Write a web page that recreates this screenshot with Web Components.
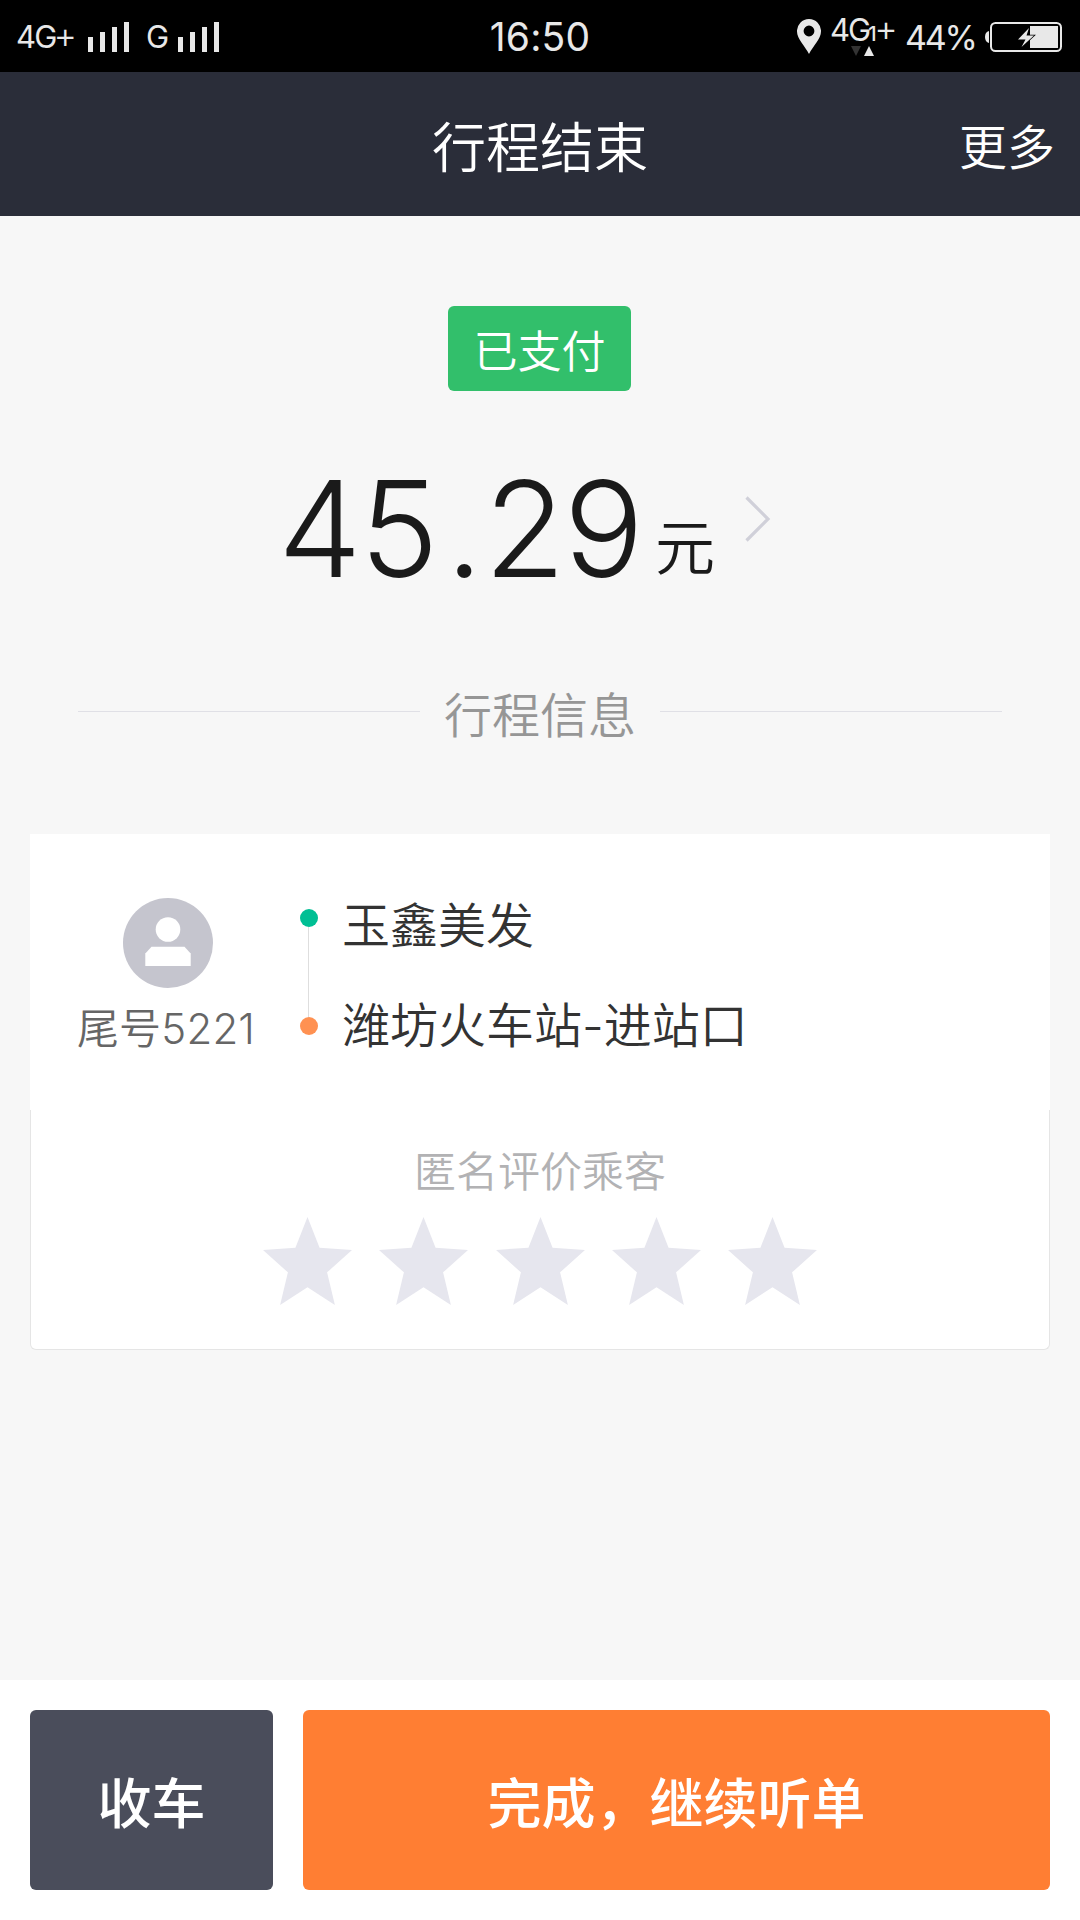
<!DOCTYPE html>
<html lang="zh-CN">
<head>
<meta charset="utf-8">
<title>行程结束</title>
<style>
  html, body {
    margin: 0;
    padding: 0;
  }

  body {
    width: 1080px;
    height: 1920px;
    overflow: hidden;
    background: #f7f7f7;
    font-family: "Noto Sans CJK SC", "Liberation Sans", sans-serif;
  }
</style>
</head>
<body>
<trip-page>
  <status-bar slot="status" time="16:50" battery="44"></status-bar>
  <nav-header slot="header" action="更多">行程结束</nav-header>

  <pay-summary status="已支付" amount="45.29" unit="元"></pay-summary>
  <section-title>行程信息</section-title>
  <trip-card>
    <passenger-badge slot="passenger">尾号5221</passenger-badge>
    <trip-route slot="route" from="玉鑫美发" to="潍坊火车站-进站口"></trip-route>
    <star-rating slot="rating" max="5">匿名评价乘客</star-rating>
  </trip-card>

  <action-button slot="actions" variant="dark">收车</action-button>
  <action-button slot="actions" variant="primary">完成，继续听单</action-button>
</trip-page>

<script>
/**
 * TripPage - Page shell: status bar, header, content and bottom actions
 *
 * @element trip-page
 */
class TripPage extends HTMLElement {
  constructor() {
    super();
    this.attachShadow({ mode: 'open' });
  }

  connectedCallback() {
    this.shadowRoot.innerHTML = `
      <style>
        :host {
          display: flex;
          flex-direction: column;
          width: 1080px;
          height: 1920px;
        }

        main {
          flex: 1;
          display: flex;
          flex-direction: column;
        }

        footer {
          display: flex;
          gap: 30px;
          box-sizing: border-box;
          height: 240px;
          padding: 30px;
          background: #fff;
        }
      </style>
      <slot name="status"></slot>
      <slot name="header"></slot>
      <main><slot></slot></main>
      <footer><slot name="actions"></slot></footer>
    `;
  }
}

/**
 * SignalBars - Four rising signal strength bars
 *
 * @element signal-bars
 */
class SignalBars extends HTMLElement {
  constructor() {
    super();
    this.attachShadow({ mode: 'open' });
  }

  connectedCallback() {
    this.shadowRoot.innerHTML = `
      <style>
        :host {
          display: flex;
          align-items: flex-end;
          gap: 7px;
          height: 30px;
        }

        i {
          width: 5px;
          background: #e8e8e8;
        }
      </style>
      ${[15, 20, 25, 30].map(h => `<i style="height:${h}px"></i>`).join('')}
    `;
  }
}

/**
 * StatusBar - System status bar
 *
 * @element status-bar
 * @attr {string} time - Clock text
 * @attr {string} battery - Battery percentage
 */
class StatusBar extends HTMLElement {
  constructor() {
    super();
    this.attachShadow({ mode: 'open' });
  }

  connectedCallback() {
    const time = this.getAttribute('time') || '';
    const battery = this.getAttribute('battery') || '0';

    this.shadowRoot.innerHTML = `
      <style>
        :host {
          display: grid;
          grid-template-columns: 1fr auto 1fr;
          align-items: center;
          height: 72px;
          background: #000;
          color: #e8e8e8;
          font-family: Inter, sans-serif;
          white-space: nowrap;
        }

        .left, .right {
          display: flex;
          align-items: center;
          height: 72px;
        }

        .left {
          padding-left: 16px;
          font-size: 31px;
        }

        .right {
          justify-content: flex-end;
          padding-right: 18px;
        }

        .net {
          width: 72px;
          line-height: 36px;
          letter-spacing: -1.8px;
        }

        .net.second {
          width: 32px;
          margin-left: 17px;
        }

        /* the plus is drawn wider than the letters */
        .plus {
          margin-left: -2px;
          font-size: 36px;
          font-weight: 350;
          line-height: 1px;
        }

        .time {
          font-size: 39px;
          line-height: 72px;
          letter-spacing: 0.2px;
          padding-top: 1px;
        }

        .data {
          display: flex;
          flex-direction: column;
          width: 68px;
          margin: 0 7px 0 9px;
          font-size: 31px;
          letter-spacing: -2px;
        }

        .data div {
          display: flex;
          align-items: baseline;
          height: 29px;
          line-height: 26px;
        }

        .data small {
          font-size: 20px;
          font-weight: 500;
          width: 8px;
          margin-left: -1px;
        }

        .percent {
          width: 80px;
          padding-top: 1px;
          font-size: 34px;
          letter-spacing: -2.2px;
        }

        svg {
          display: block;
        }
      </style>
      <div class="left">
        <span class="net">4G<span class="plus">+</span></span>
        <signal-bars></signal-bars>
        <span class="net second">G</span>
        <signal-bars></signal-bars>
      </div>
      <div class="time">${time}</div>
      <div class="right">
        <svg width="24" height="35" viewBox="0 0 24 35">
          <path fill="#e8e8e8" fill-rule="evenodd" d="M12 0a12 12 0 0 1 12 12.500C24 20 16 27 12 35 8 27 0 20 0 12.500A12 12 0 0 1 12 0zM12 6.600a5.400 5.400 0 1 0 0 10.800a5.400 5.400 0 1 0 0-10.800z"/>
        </svg>
        <div class="data">
          <div>4G<small>1</small><span class="plus">+</span></div>
          <svg width="66" height="10" viewBox="0 0 66 10">
            <path fill="#333" d="M21 0h10l-5 10z"/>
            <path fill="#e8e8e8" d="M34 10h10L39 0z"/>
          </svg>
        </div>
        <span class="percent">${battery}%</span>
        <svg width="77" height="30" viewBox="0 0 77 30">
          <path fill="#e8e8e8" d="M4 9v12q-4-1-4-6t4-6z"/>
          <rect x="6" y="1" width="70" height="28" rx="4.500" fill="none" stroke="#e8e8e8" stroke-width="2"/>
          <rect x="45" y="4" width="28" height="22" fill="#e8e8e8"/>
          <path d="M44 6L33 17.500h7.500L36.500 25 49 13.500h-7.500z" fill="#e8e8e8" stroke="#000" stroke-width="1.500" paint-order="stroke"/>
        </svg>
      </div>
    `;
  }
}

/**
 * NavHeader - Dark title bar with one action on the right
 *
 * @element nav-header
 * @attr {string} action - Action label
 */
class NavHeader extends HTMLElement {
  constructor() {
    super();
    this.attachShadow({ mode: 'open' });
  }

  connectedCallback() {
    this.shadowRoot.innerHTML = `
      <style>
        :host {
          display: grid;
          grid-template-columns: 1fr auto 1fr;
          align-items: center;
          height: 144px;
          background: #2a2d39;
          color: #fff;
          font-weight: 350;
        }

        h1 {
          grid-column: 2;
          margin: 0;
          padding-top: 2px;
          font-size: 54px;
          line-height: 80px;
          font-weight: inherit;
        }

        .action {
          justify-self: end;
          padding-right: 25px;
          font-size: 48px;
          line-height: 72px;
        }
      </style>
      <h1><slot></slot></h1>
      <div class="action">${this.getAttribute('action') || ''}</div>
    `;
  }
}

/**
 * PaySummary - Payment state and amount
 *
 * @element pay-summary
 * @attr {string} status - Payment state label
 * @attr {string} amount - Amount
 * @attr {string} unit - Currency unit
 */
class PaySummary extends HTMLElement {
  constructor() {
    super();
    this.attachShadow({ mode: 'open' });
  }

  connectedCallback() {
    const amount = this.getAttribute('amount') || '';

    this.shadowRoot.innerHTML = `
      <style>
        :host {
          display: flex;
          flex-direction: column;
          align-items: center;
          height: 445px;
          padding-top: 90px;
          box-sizing: border-box;
        }

        .status {
          width: 183px;
          height: 85px;
          margin-right: 1px;
          border-radius: 6px;
          background: #32bf6b;
          color: #fff;
          font-size: 44px;
          line-height: 87px;
          font-weight: 350;
          text-align: center;
        }

        .price {
          display: flex;
          align-items: flex-start;
          align-self: flex-start;
          height: 160px;
          margin: 56px 0 0 278px;
          color: #1a1a1a;
        }

        .amount {
          width: 377px;
          padding-top: 2px;
          font-family: Inter, sans-serif;
          font-size: 133px;
          font-weight: 300;
          line-height: 160px;
          letter-spacing: -2px;
          white-space: nowrap;
        }

        .point {
          margin: 0 3px 0 9px;
        }

        .unit {
          width: 90px;
          margin-top: 57px;
          font-size: 60px;
          line-height: 80px;
          font-weight: 350;
        }

        svg {
          display: block;
          margin-top: 49px;
        }
      </style>
      <div class="status">${this.getAttribute('status') || ''}</div>
      <div class="price">
        <span class="amount">${amount.replace('.', '<span class="point">.</span>')}</span>
        <span class="unit">${this.getAttribute('unit') || ''}</span>
        <svg width="26" height="46" viewBox="0 0 26 46">
          <path d="M1.500 1.500L23 23 1.500 44.500" fill="none" stroke="#d0d0d9" stroke-width="3.200"/>
        </svg>
      </div>
    `;
  }
}

/**
 * SectionTitle - Label between two hairlines
 *
 * @element section-title
 */
class SectionTitle extends HTMLElement {
  constructor() {
    super();
    this.attachShadow({ mode: 'open' });
  }

  connectedCallback() {
    this.shadowRoot.innerHTML = `
      <style>
        :host {
          display: flex;
          align-items: center;
          justify-content: space-between;
          height: 101px;
          padding: 0 78px;
          color: #969696;
          font-size: 48px;
          font-weight: 350;
        }

        i {
          width: 342px;
          height: 1px;
          background: #e0e0e6;
        }
      </style>
      <i></i><span><slot></slot></span><i></i>
    `;
  }
}

/**
 * TripCard - Trip details on top, rating below
 *
 * @element trip-card
 */
class TripCard extends HTMLElement {
  constructor() {
    super();
    this.attachShadow({ mode: 'open' });
  }

  connectedCallback() {
    this.shadowRoot.innerHTML = `
      <style>
        :host {
          display: block;
          margin: 72px 30px 0;
        }

        .info {
          display: flex;
          height: 276px;
          background: #fff;
        }

        .rating {
          box-sizing: border-box;
          height: 240px;
          border: 1px solid #e5e5e5;
          border-top: 0;
          border-radius: 0 0 6px 6px;
          background: #fff;
        }
      </style>
      <div class="info">
        <slot name="passenger"></slot>
        <slot name="route"></slot>
      </div>
      <div class="rating"><slot name="rating"></slot></div>
    `;
  }
}

/**
 * PassengerBadge - Avatar with the passenger's phone tail
 *
 * @element passenger-badge
 */
class PassengerBadge extends HTMLElement {
  constructor() {
    super();
    this.attachShadow({ mode: 'open' });
  }

  connectedCallback() {
    this.shadowRoot.innerHTML = `
      <style>
        :host {
          display: flex;
          flex-direction: column;
          align-items: center;
          width: 275px;
          padding-top: 64px;
          color: #666;
          font-family: Inter, "Noto Sans CJK SC", sans-serif;
          font-size: 42px;
          font-weight: 350;
          line-height: 60px;
          white-space: nowrap;
        }

        svg {
          display: block;
          margin-bottom: 11px;
        }

        span {
          padding-right: 3px;
          letter-spacing: 0.2px;
        }
      </style>
      <svg width="90" height="90" viewBox="0 0 90 90">
        <circle cx="45" cy="45" r="45" fill="#c5c5ce"/>
        <circle cx="45" cy="31.500" r="12.300" fill="#fff"/>
        <path d="M22.300 68V55.500L28.500 48.700h33L67.700 55.500V68z" fill="#fff"/>
      </svg>
      <span><slot></slot></span>
    `;
  }
}

/**
 * TripRoute - Start and end points joined by a line
 *
 * @element trip-route
 * @attr {string} from - Start name
 * @attr {string} to - Destination name
 */
class TripRoute extends HTMLElement {
  constructor() {
    super();
    this.attachShadow({ mode: 'open' });
  }

  connectedCallback() {
    this.shadowRoot.innerHTML = `
      <style>
        :host {
          display: flex;
          color: #333;
          font-family: Inter, "Noto Sans CJK SC", sans-serif;
          font-size: 48px;
          font-weight: 350;
          white-space: nowrap;
        }

        .track {
          display: flex;
          flex-direction: column;
          align-items: center;
          width: 7px;
          padding-top: 75px;
          margin-right: 30px;
        }

        .dot {
          width: 18px;
          height: 18px;
          border-radius: 50%;
          background: #00bf94;
        }

        .dot.end {
          background: #ff9152;
        }

        .line {
          width: 1px;
          height: 90px;
          background: #dedede;
        }

        .names {
          padding-top: 57px;
          line-height: 70px;
        }

        .names div + div {
          margin-top: 30px;
        }
      </style>
      <div class="track">
        <div class="dot"></div>
        <div class="line"></div>
        <div class="dot end"></div>
      </div>
      <div class="names">
        <div>${this.getAttribute('from') || ''}</div>
        <div>${this.getAttribute('to') || ''}</div>
      </div>
    `;
  }
}

/**
 * StarRating - Label with a row of stars
 *
 * @element star-rating
 * @attr {number} max - Number of stars
 */
class StarRating extends HTMLElement {
  constructor() {
    super();
    this.attachShadow({ mode: 'open' });
  }

  connectedCallback() {
    const max = Number(this.getAttribute('max')) || 5;
    const star = `
      <svg width="89" height="88" viewBox="0 0 90 89">
        <path d="M45 0L57.200 31 90 33.300 64.800 56 72.700 89 45 71 17.300 89 25.200 56 0 33.300 32.800 31z" fill="#e6e6ee"/>
      </svg>
    `;

    this.shadowRoot.innerHTML = `
      <style>
        :host {
          display: flex;
          flex-direction: column;
          align-items: center;
          padding-top: 29px;
          color: #b2b2b4;
          font-size: 42px;
          font-weight: 350;
          line-height: 60px;
        }

        .stars {
          display: flex;
          gap: 27.300px;
          margin-top: 18px;
        }

        svg {
          display: block;
        }
      </style>
      <div><slot></slot></div>
      <div class="stars">${star.repeat(max)}</div>
    `;
  }
}

/**
 * ActionButton - Large bottom button
 *
 * @element action-button
 * @attr {string} variant - dark | primary
 */
class ActionButton extends HTMLElement {
  constructor() {
    super();
    this.attachShadow({ mode: 'open' });
  }

  connectedCallback() {
    this.shadowRoot.innerHTML = `
      <style>
        :host {
          display: block;
          flex: 1;
        }

        :host([variant="dark"]) {
          flex: 0 0 243px;
        }

        button {
          width: 100%;
          height: 180px;
          padding: 0;
          border: 0;
          border-radius: 6px;
          background: #ff7e33;
          color: #fff;
          font-family: inherit;
          font-size: 54px;
          font-weight: 450;
          cursor: pointer;
        }

        :host([variant="dark"]) button {
          background: #4a4d5b;
        }
      </style>
      <button><slot></slot></button>
    `;
  }
}

customElements.define('trip-page', TripPage);
customElements.define('signal-bars', SignalBars);
customElements.define('status-bar', StatusBar);
customElements.define('nav-header', NavHeader);
customElements.define('pay-summary', PaySummary);
customElements.define('section-title', SectionTitle);
customElements.define('trip-card', TripCard);
customElements.define('passenger-badge', PassengerBadge);
customElements.define('trip-route', TripRoute);
customElements.define('star-rating', StarRating);
customElements.define('action-button', ActionButton);
</script>
</body>
</html>
